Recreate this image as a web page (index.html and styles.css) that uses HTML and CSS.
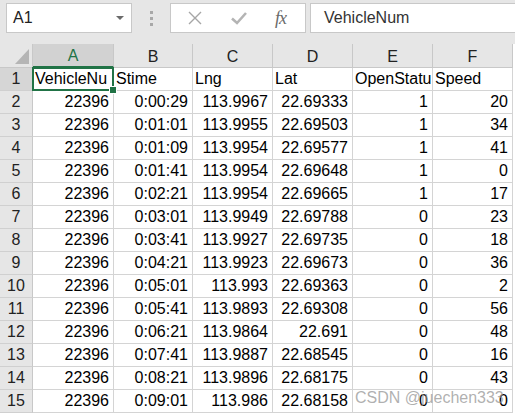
FILE: index.html
```html
<!DOCTYPE html>
<html>
<head>
<meta charset="utf-8">
<link rel="stylesheet" href="styles.css">
</head>
<body>
<div class="topbar">
  <div class="namebox"><span>A1</span><span class="caret"></span></div>
  <div class="grip"><i></i><i></i><i></i></div>
  <div class="fbtns">
    <svg class="ico" width="16" height="16" viewBox="0 0 16 16"><path d="M2 2 L14 14 M14 2 L2 14" stroke="#a6a6a6" stroke-width="1.4" fill="none"/></svg>
    <svg class="ico" width="18" height="16" viewBox="0 0 18 16"><path d="M2 8.5 L7 13 L16 3" stroke="#b4b4b4" stroke-width="2.6" fill="none"/></svg>
    <span class="fx">fx</span>
  </div>
  <div class="finput">VehicleNum</div>
</div>
<div class="sheet">
  <div class="corner"><svg width="14" height="15" viewBox="0 0 14 15"><polygon points="14,0 14,15 0,15" fill="#b5b5b5"/></svg></div>
  <div class="ch sel">A</div><div class="ch">B</div><div class="ch">C</div><div class="ch">D</div><div class="ch">E</div><div class="ch">F</div>

  <div class="rh rsel">1</div>
  <div class="c t active">VehicleNu</div><div class="c t">Stime</div><div class="c t">Lng</div><div class="c t">Lat</div><div class="c t">OpenStatu</div><div class="c t">Speed</div>

  <div class="rh">2</div><div class="c">22396</div><div class="c">0:00:29</div><div class="c">113.9967</div><div class="c">22.69333</div><div class="c">1</div><div class="c">20</div>
  <div class="rh">3</div><div class="c">22396</div><div class="c">0:01:01</div><div class="c">113.9955</div><div class="c">22.69503</div><div class="c">1</div><div class="c">34</div>
  <div class="rh">4</div><div class="c">22396</div><div class="c">0:01:09</div><div class="c">113.9954</div><div class="c">22.69577</div><div class="c">1</div><div class="c">41</div>
  <div class="rh">5</div><div class="c">22396</div><div class="c">0:01:41</div><div class="c">113.9954</div><div class="c">22.69648</div><div class="c">1</div><div class="c">0</div>
  <div class="rh">6</div><div class="c">22396</div><div class="c">0:02:21</div><div class="c">113.9954</div><div class="c">22.69665</div><div class="c">1</div><div class="c">17</div>
  <div class="rh">7</div><div class="c">22396</div><div class="c">0:03:01</div><div class="c">113.9949</div><div class="c">22.69788</div><div class="c">0</div><div class="c">23</div>
  <div class="rh">8</div><div class="c">22396</div><div class="c">0:03:41</div><div class="c">113.9927</div><div class="c">22.69735</div><div class="c">0</div><div class="c">18</div>
  <div class="rh">9</div><div class="c">22396</div><div class="c">0:04:21</div><div class="c">113.9923</div><div class="c">22.69673</div><div class="c">0</div><div class="c">36</div>
  <div class="rh">10</div><div class="c">22396</div><div class="c">0:05:01</div><div class="c">113.993</div><div class="c">22.69363</div><div class="c">0</div><div class="c">2</div>
  <div class="rh">11</div><div class="c">22396</div><div class="c">0:05:41</div><div class="c">113.9893</div><div class="c">22.69308</div><div class="c">0</div><div class="c">56</div>
  <div class="rh">12</div><div class="c">22396</div><div class="c">0:06:21</div><div class="c">113.9864</div><div class="c">22.691</div><div class="c">0</div><div class="c">48</div>
  <div class="rh">13</div><div class="c">22396</div><div class="c">0:07:41</div><div class="c">113.9887</div><div class="c">22.68545</div><div class="c">0</div><div class="c">16</div>
  <div class="rh">14</div><div class="c">22396</div><div class="c">0:08:21</div><div class="c">113.9896</div><div class="c">22.68175</div><div class="c">0</div><div class="c">43</div>
  <div class="rh">15</div><div class="c">22396</div><div class="c">0:09:01</div><div class="c">113.986</div><div class="c">22.68158</div><div class="c">0</div><div class="c">0</div>
</div>
<div class="watermark">CSDN @juechen333</div>
</body>
</html>
```
FILE: styles.css
```css
* { box-sizing: border-box; }
html, body { margin: 0; padding: 0; }
body {
  width: 515px;
  height: 415px;
  overflow: hidden;
  background: #fff;
  font-family: "Liberation Sans", Arial, sans-serif;
  font-size: 16px;
  color: #000;
  position: relative;
}
.topbar {
  height: 44px;
  background: #e6e6e6;
  display: flex;
  align-items: flex-start;
  padding-top: 3px;
}
.namebox {
  margin-left: 6px;
  width: 126px;
  height: 30px;
  background: #fff;
  border: 1px solid #c8c8c8;
  display: flex;
  align-items: center;
  justify-content: space-between;
  padding: 0 7px 0 6px;
  color: #222;
}
.caret {
  width: 0; height: 0;
  border-left: 4px solid transparent;
  border-right: 4px solid transparent;
  border-top: 4px solid #6a6a6a;
}
.grip {
  width: 38px;
  height: 30px;
  display: flex;
  flex-direction: column;
  align-items: center;
  justify-content: center;
  gap: 3px;
}
.grip i {
  display: block;
  width: 3px;
  height: 3px;
  background: #a8a8a8;
}
.fbtns {
  width: 136px;
  height: 30px;
  background: #fff;
  border: 1px solid #c8c8c8;
  display: flex;
  align-items: center;
  padding-left: 16px;
}
.fbtns .ico { display: block; }
.fbtns .ico:nth-child(2) { margin-left: 27px; }
.fx {
  margin-left: 27px;
  font-family: "Liberation Serif", "DejaVu Serif", serif;
  font-style: italic;
  font-size: 18px;
  color: #6a6a6a;
  letter-spacing: -1px;
}
.finput {
  flex: 1;
  margin-left: 4px;
  height: 30px;
  background: #fff;
  border: 1px solid #c8c8c8;
  border-right: none;
  display: flex;
  align-items: center;
  padding-left: 13px;
  color: #333;
}
.sheet {
  display: grid;
  grid-template-columns: 33px 81px 79px 80px 80px 80px 80px;
  grid-template-rows: 24px repeat(15, 23px);
}
.corner {
  background: #e6e6e6;
  border-right: 1px solid #c8c8c8;
  border-bottom: 1px solid #c8c8c8;
  display: flex;
  align-items: flex-end;
  justify-content: flex-end;
  padding: 0 3px 3px 0;
}
.corner svg { display: block; }
.ch {
  background: #e6e6e6;
  border-right: 1px solid #c8c8c8;
  border-bottom: 1px solid #c8c8c8;
  display: flex;
  align-items: center;
  justify-content: center;
  color: #222;
  padding-top: 2px;
}
.ch.sel {
  background: #d2d2d2;
  color: #217346;
  border-bottom: 2px solid #217346;
}
.rh {
  background: #e6e6e6;
  border-right: 1px solid #c8c8c8;
  border-bottom: 1px solid #d0d0d0;
  display: flex;
  align-items: center;
  justify-content: center;
  color: #222;
}
.rh.rsel { background: #d6d6d6; }
.c {
  border-right: 1px solid #d4d4d4;
  border-bottom: 1px solid #d4d4d4;
  display: flex;
  align-items: center;
  justify-content: flex-end;
  padding: 0 4px 0 2px;
  white-space: nowrap;
  overflow: hidden;
}
.c.t { justify-content: flex-start; padding-left: 2px; }
.c.active { position: relative; overflow: visible; }
.c.active::before {
  content: "";
  position: absolute;
  left: -1px; top: -1px; right: -1px; bottom: -1px;
  border: 2px solid #217346;
}
.c.active::after {
  content: "";
  position: absolute;
  right: -4px; bottom: -4px;
  width: 6px; height: 6px;
  background: #217346;
  border: 1px solid #fff;
}
.watermark {
  position: absolute;
  left: 355px;
  top: 389px;
  color: rgba(150, 150, 150, 0.75);
  font-size: 16px;
  white-space: nowrap;
}
```
